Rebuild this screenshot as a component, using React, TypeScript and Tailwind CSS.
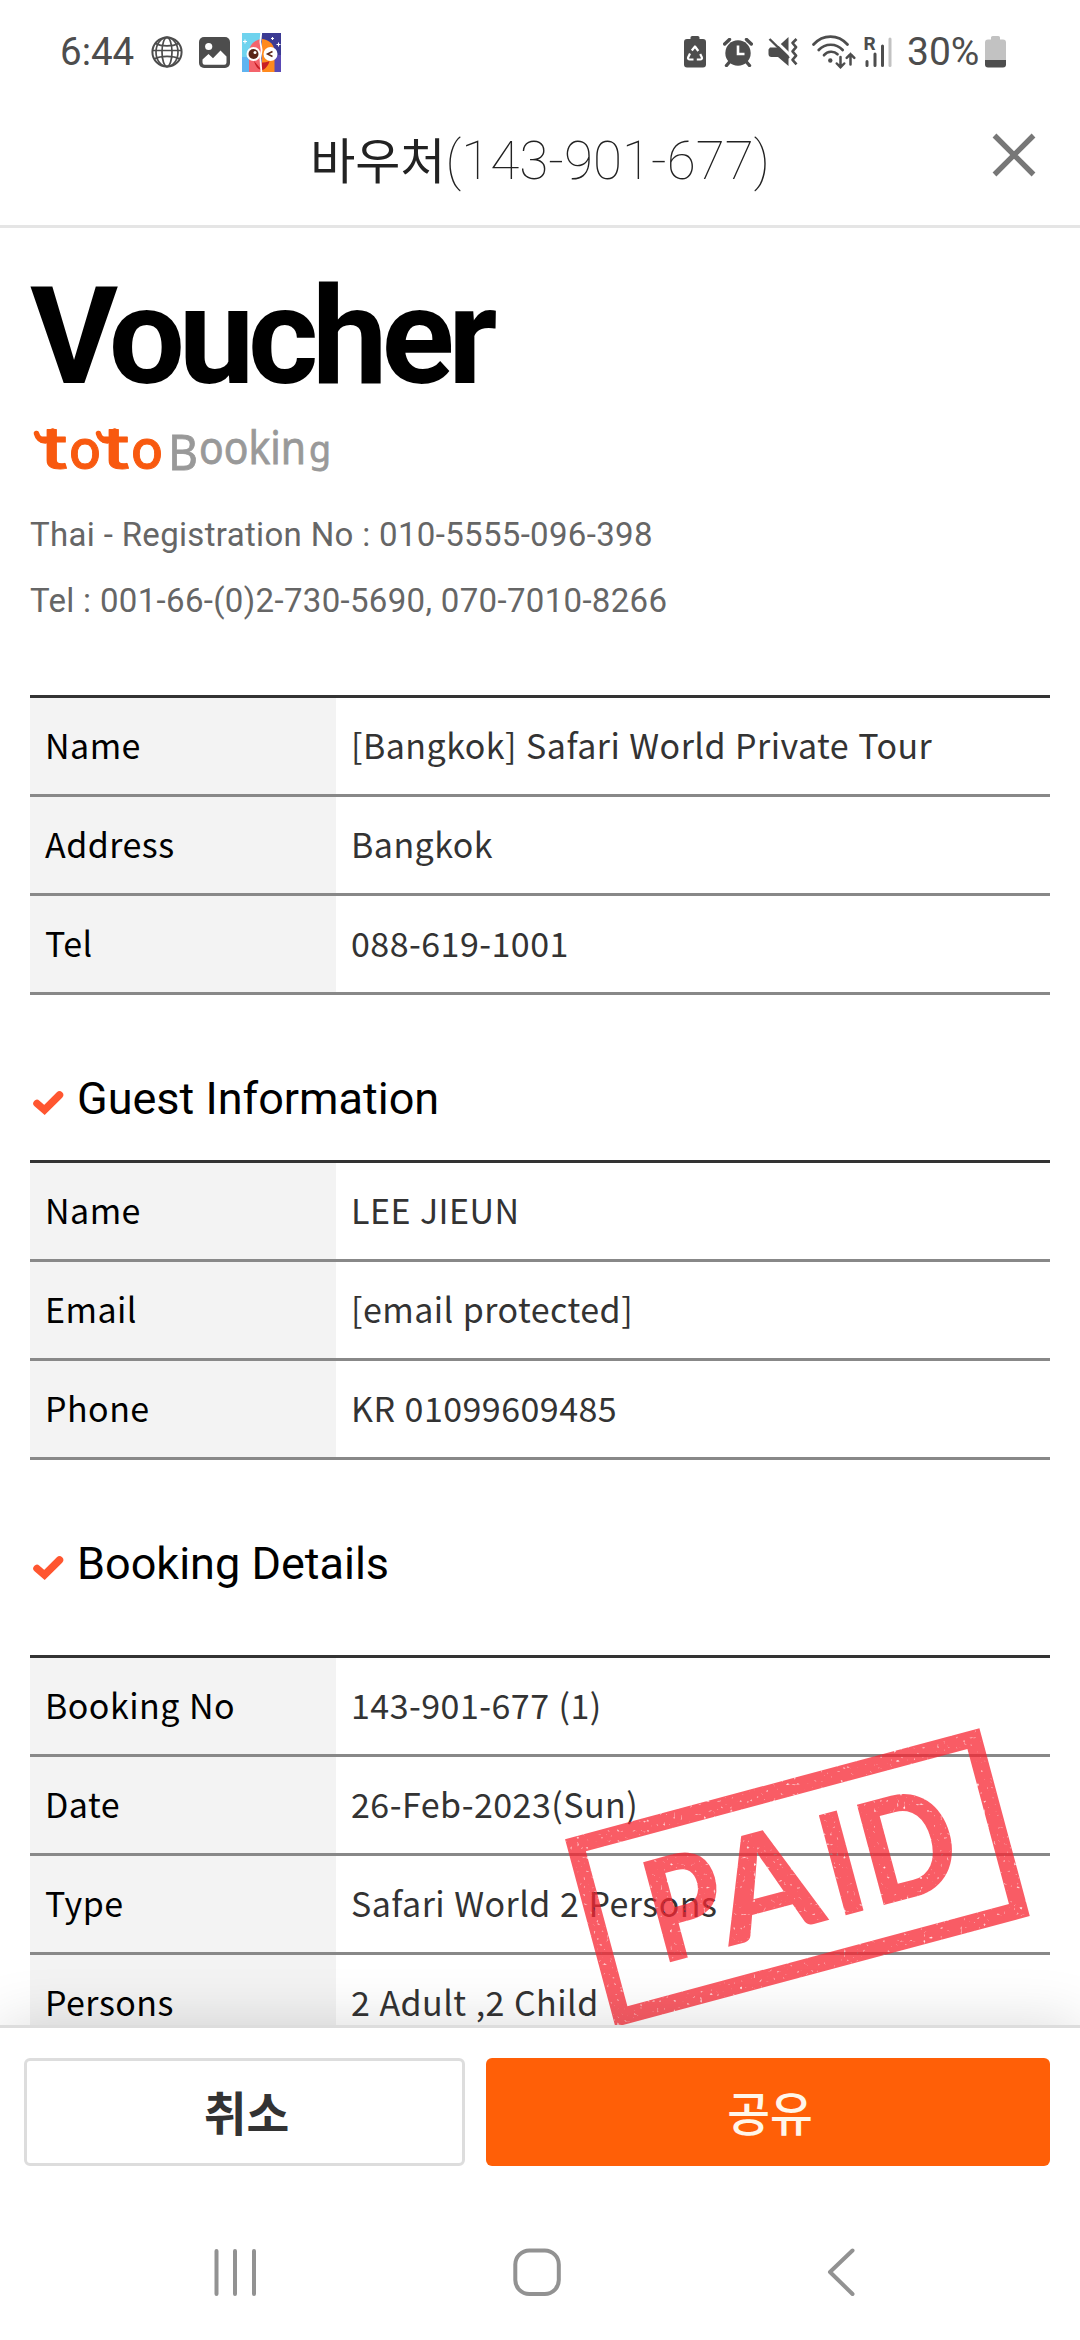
import React from "react";

const ROBOTO = "font-['Roboto','Noto_Sans_CJK_KR',sans-serif]";
const NOTO = "font-['Noto_Sans_CJK_KR','Noto_Sans',sans-serif]";

function GlobeIcon() {
  return (
    <svg width="32" height="32" viewBox="0 0 32 32" fill="none" stroke="#4d4d4d" strokeWidth="1.7">
      <circle cx="16" cy="16" r="14.6" strokeWidth="2" />
      <ellipse cx="16" cy="16" rx="11" ry="14.6" />
      <ellipse cx="16" cy="16" rx="5" ry="14.6" />
      <path d="M4.5 7.5c6 3.2 17 3.2 23 0M1.5 14.5h29M3 23c7-3.4 19-3.4 26 0" />
    </svg>
  );
}

function GalleryIcon() {
  return (
    <svg width="31" height="31" viewBox="0 0 31 31">
      <rect width="31" height="31" rx="5" fill="#4d4d4d" />
      <circle cx="9.7" cy="9.5" r="3.6" fill="#fff" />
      <path d="M3.5 22.5l6-5.5 4.5 4.2L21.500 13.500l6 6V25.500a2.200 2.200 0 0 1-2.200 2.200H5.700a2.200 2.200 0 0 1-2.200-2.200z" fill="#fff" />
    </svg>
  );
}

function FaceAppIcon() {
  return (
    <svg width="39" height="39" viewBox="0 0 39 39">
      <rect width="20" height="39" fill="#6fd3ee" />
      <path d="M0 24h8v15H0z" fill="#5fb4f0" />
      <rect x="19" width="20" height="39" fill="#3b3a93" />
      <path d="M30 22h9v17h-9z" fill="#5a49b5" />
      <path d="M7 39V20C7 12 12 7.500 19 6v33z" fill="#f4646c" />
      <path d="M20 6c8 1 12.500 6 12.500 13v20H20z" fill="#ff8a1e" />
      <path d="M12 28c1.500 5.500 4 8 7 9v-7.500c3 0 6-.5 8.500-1.500-1 4.500-4 8-7.500 9.200z" fill="#c81e24" />
      <path d="M19.200 0l-.8 9 1.200 8-1.200 8 1 14" stroke="#fff" strokeWidth="1.800" fill="none" />
      <circle cx="11.500" cy="21" r="7" fill="#fff" />
      <circle cx="11.500" cy="21" r="5" fill="#5b2416" />
      <circle cx="13" cy="19.500" r="1.500" fill="#fff" />
      <circle cx="28.500" cy="21" r="7" fill="#fff" />
      <path d="M30.500 18.500l-5 2.500 5 2.500" stroke="#5b2416" strokeWidth="1.500" fill="none" />
      <path d="M3 6.500v4M1 8.500h4M36.500 9.500v4M34.500 11.500h4M30.500 4v3M29 5.500h3" stroke="#fff" strokeWidth="1.100" />
    </svg>
  );
}

function RecycleBatteryIcon() {
  return (
    <svg width="22" height="32" viewBox="0 0 22 32">
      <path d="M6.500 3V1.800C6.500.8 7.200 0 8.200 0h5.600c1 0 1.700.8 1.700 1.800V3H19a3 3 0 0 1 3 3v22.500a3 3 0 0 1-3 3H3a3 3 0 0 1-3-3V6a3 3 0 0 1 3-3z" fill="#4d4d4d" />
      <g fill="none" stroke="#fff" strokeWidth="2.200" strokeLinejoin="round">
        <path d="M7.800 14.500L11 10.500l3.300 4.500" />
        <path d="M16.200 18l1.600 3.300c.6 1.300-.2 2.200-1.600 2.200h-3.400" />
        <path d="M9.500 23.500H5.800c-1.400 0-2.200-.9-1.600-2.200L6 17.500" />
      </g>
    </svg>
  );
}

function AlarmIcon() {
  return (
    <svg width="30" height="29" viewBox="0 0 30 29">
      <circle cx="15" cy="15" r="12.700" fill="#4d4d4d" />
      <path d="M1.700 6L6.500 1.500M28.300 6L23.500 1.500M6.500 24l-3 3.500M23.500 24l3 3.500" stroke="#4d4d4d" strokeWidth="3.400" strokeLinecap="round" />
      <path d="M15 7.500V16h6.500" fill="none" stroke="#fff" strokeWidth="2.600" />
    </svg>
  );
}

function MuteIcon() {
  return (
    <svg width="31" height="30" viewBox="0 0 31 30">
      <path d="M2 10.500h7L20.500 0v29L10 20H3.500C1.500 20 .5 19 .5 17v-4.500z" fill="#4d4d4d" />
      <path d="M3.500 0l18 17.500" stroke="#fff" strokeWidth="3" />
      <path d="M1.500 2l19.500 19" stroke="#4d4d4d" strokeWidth="2.400" />
      <path d="M28.500 2l-4 4 3.600 4.200-3.600 4.200 3.600 4.200-3.600 4.200 4 4.500" fill="none" stroke="#4d4d4d" strokeWidth="2.600" strokeLinejoin="round" />
    </svg>
  );
}

function WifiIcon() {
  return (
    <svg width="44" height="34" viewBox="0 0 44 34" fill="none" stroke="#4d4d4d" strokeWidth="2.700" strokeLinecap="round">
      <path d="M1.500 9.500C11 -1 26 -1 35.500 9.500" />
      <path d="M6.700 15c6.500-7 17.500-7 24 0" />
      <path d="M12 20.200c3.800-4.400 10-4.400 13.500-1" />
      <circle cx="18.300" cy="25.500" r="2.200" fill="#4d4d4d" stroke="none" />
      <path d="M28.500 22v10.200M24.800 28.500l3.700 3.800 3.700-3.800M38.500 29.500V19M34.700 22.800l3.800-3.800 3.800 3.800" strokeWidth="2.500" />
    </svg>
  );
}

function SignalIcon() {
  return (
    <svg width="31" height="42" viewBox="0 -4 31 42" className="overflow-visible">
      <text x="0.500" y="14.500" className="font-['Roboto',sans-serif] text-[19px] font-bold" fill="#4d4d4d">R</text>
      <g strokeWidth="3" strokeLinecap="round" stroke="#4d4d4d">
        <path d="M4 26.500v4M12 19v11.500M19.500 11v19.500" />
        <path d="M27 4v26.500" stroke="#c2c2c2" />
      </g>
    </svg>
  );
}

function BatteryIcon() {
  return (
    <svg width="21" height="32" viewBox="0 0 21 32">
      <path d="M6 3.500V1.800C6 .8 6.700 0 7.700 0h5.600c1 0 1.700.8 1.700 1.800v1.700h3a3 3 0 0 1 3 3V24H0V6.500a3 3 0 0 1 3-3z" fill="#c2c2c2" />
      <path d="M0 24h21v4.500a3 3 0 0 1-3 3H3a3 3 0 0 1-3-3z" fill="#4d4d4d" />
    </svg>
  );
}

function StatusBar() {
  return (
    <div className={`flex h-[104px] shrink-0 items-center pl-[60px] pr-[74px] text-[38.5px] leading-none text-[#4d4d4d] ${ROBOTO}`}>
      <span className="w-[91px]">6:44</span>
      <GlobeIcon />
      <span className="ml-4"><GalleryIcon /></span>
      <span className="ml-3"><FaceAppIcon /></span>
      <div className="ml-auto flex items-center">
        <RecycleBatteryIcon />
        <span className="ml-[17px]"><AlarmIcon /></span>
        <span className="ml-[15px]"><MuteIcon /></span>
        <span className="ml-[13px]"><WifiIcon /></span>
        <span className="ml-[7px]"><SignalIcon /></span>
        <span className="ml-[13px] w-[78px] whitespace-nowrap text-[39px]">30%</span>
        <BatteryIcon />
      </div>
    </div>
  );
}

function TitleBar() {
  return (
    <header className="relative flex h-[124px] shrink-0 items-center justify-center border-b-[3px] border-[#e5e5e5] pb-2 text-[#222]">
      <h1 className="flex items-baseline whitespace-nowrap">
        <span className={`text-[49px] font-normal leading-none ${NOTO}`}>바우처</span>
        <span className="font-['Roboto',sans-serif] text-[53px] font-thin leading-none">(143-901-677)</span>
      </h1>
      <button aria-label="close" className="absolute right-[44px] top-[29px]">
        <svg width="44" height="44" viewBox="0 0 44 44" stroke="#777" strokeWidth="5.400">
          <path d="M2.500 2.500l39 39M41.500 2.500l-39 39" />
        </svg>
      </button>
    </header>
  );
}

function TotoLogo() {
  return (
    <svg width="320" height="70" viewBox="0 0 320 70" className="block overflow-visible">
      <g fill="#f8590f" stroke="#f8590f" strokeWidth="1" strokeLinejoin="round" className="font-['Inter',sans-serif] font-medium">
        <text x="10" y="57" textLength="28" lengthAdjust="spacingAndGlyphs" className="text-[58px]">t</text>
        <text x="39" y="57" textLength="32" lengthAdjust="spacingAndGlyphs" className="text-[55px]">o</text>
        <text x="72" y="57" textLength="28" lengthAdjust="spacingAndGlyphs" className="text-[58px]">t</text>
        <text x="101" y="57" textLength="32" lengthAdjust="spacingAndGlyphs" className="text-[55px]">o</text>
      </g>
      <g fill="none" stroke="#f8590f" strokeWidth="5.500" strokeLinecap="round">
        <path d="M6.500 21.500c1 4 4 7 9 7.500M68.500 21.500c1 4 4 7 9 7.500" />
        <path d="M22.500 19l-.5 7M84.500 19l-.5 7" />
      </g>
      <g fill="#999" stroke="#999" strokeWidth="0.800" className="font-['Noto_Sans',sans-serif]">
        <text x="138" y="57.500" textLength="30" lengthAdjust="spacingAndGlyphs" className="text-[50px]">B</text>
        <text x="169" y="52" textLength="107" lengthAdjust="spacingAndGlyphs" className="text-[45px]">ookin</text>
        <text x="279" y="50" textLength="22" lengthAdjust="spacingAndGlyphs" className="text-[37px]">g</text>
      </g>
    </svg>
  );
}

type Row = [string, string];

function InfoTable({ rows }: { rows: Row[] }) {
  return (
    <dl className={`border-t-[3px] border-[#333] text-[34px] leading-[94px] tracking-[0.46px] [word-spacing:1px] ${NOTO}`}>
      {rows.map(([label, value]) => (
        <div key={label} className="flex h-[99px] border-b-[3px] border-[#888]">
          <dt className="w-[306px] bg-[#f3f3f3] pl-[15px] text-black">{label}</dt>
          <dd className="flex-1 whitespace-nowrap pl-[15px] text-[#333]">{value}</dd>
        </div>
      ))}
    </dl>
  );
}

function SectionTitle({ children }: { children: React.ReactNode }) {
  return (
    <h3 className={`mt-[74px] flex h-[60px] items-center text-[45px] leading-[60px] text-black ${ROBOTO}`}>
      <svg width="47" height="60" viewBox="0 0 47 60" className="shrink-0">
        <path d="M7 34.500l7.500 6.500L29.500 26" fill="none" stroke="#ff5630" strokeWidth="7.500" strokeLinecap="round" />
      </svg>
      <span className="whitespace-nowrap">{children}</span>
    </h3>
  );
}

function PaidStamp() {
  return (
    <svg width="500" height="340" viewBox="0 0 500 340" className="absolute right-[20px] top-[1472px] opacity-75">
      <defs>
        <filter id="speckle" filterUnits="userSpaceOnUse" x="0" y="0" width="500" height="340">
          <feTurbulence type="fractalNoise" baseFrequency="0.3" numOctaves="1" seed="8" />
          <feColorMatrix type="matrix" values="0 0 0 0 1  0 0 0 0 1  0 0 0 0 1  0 0 0 -6 5" result="grain" />
          <feComposite in="SourceGraphic" in2="grain" operator="in" />
        </filter>
      </defs>
      <g filter="url(#speckle)">
        <g transform="translate(5.300 139.300) rotate(-15)" fill="#f72633">
          <rect x="8.300" y="8.300" width="412" height="177.500" fill="none" stroke="#f72633" strokeWidth="17" />
          <g className="font-['Lato',sans-serif] text-[143px] font-black">
            <text x="60" y="146" textLength="77" lengthAdjust="spacingAndGlyphs">P</text>
            <text x="131" y="146" textLength="102" lengthAdjust="spacingAndGlyphs">A</text>
            <text x="242" y="146" textLength="37" lengthAdjust="spacingAndGlyphs">I</text>
            <text x="281" y="146" textLength="96" lengthAdjust="spacingAndGlyphs">D</text>
          </g>
        </g>
      </g>
    </svg>
  );
}

function ActionBar() {
  return (
    <footer className="relative flex h-[171px] shrink-0 gap-[21px] border-t-[3px] border-[#ddd] bg-white pl-6 pr-[30px] pt-[30px] shadow-[0_0_60px_rgba(0,0,0,0.15)]">
      <button className={`h-[108px] w-[441px] rounded-[6px] border-[3px] border-[#ddd] pb-[2px] pl-[4px] text-[46.5px] font-bold leading-[96px] text-[#333] ${NOTO}`}>취소</button>
      <button className={`h-[108px] flex-1 rounded-[6px] bg-[#ff5f07] pb-[2px] pl-[4px] text-[46.5px] font-medium leading-[102px] text-[#fff6ea] ${NOTO}`}>공유</button>
    </footer>
  );
}

function NavBar() {
  return (
    <nav className="relative flex h-[144px] shrink-0 items-start bg-white pl-[213px] pt-[50px]">
      <svg width="46" height="52" viewBox="0 0 46 52" stroke="#929292" strokeWidth="4" strokeLinecap="round">
        <path d="M3.500 5v43M22 5v43M41 5v43" />
      </svg>
      <svg width="50" height="52" viewBox="0 0 50 52" className="ml-[253px]" fill="none" stroke="#929292" strokeWidth="4">
        <rect x="3.300" y="4.500" width="43.500" height="43.500" rx="14" />
      </svg>
      <svg width="34" height="52" viewBox="0 0 34 52" className="ml-[263px]" fill="none" stroke="#929292" strokeWidth="4" strokeLinecap="round" strokeLinejoin="round">
        <path d="M27.500 4.500L5 26l22.500 22" />
      </svg>
    </nav>
  );
}

export default function App() {
  return (
    <div className="flex h-[2340px] w-[1080px] flex-col overflow-hidden bg-white">
      <StatusBar />
      <TitleBar />
      <main className="relative min-h-0 flex-1 overflow-hidden px-[30px] pt-[34px]">
        <h2 className="h-[150px] font-['Roboto',sans-serif] text-[135px] font-bold leading-[150px] tracking-[-6.3px] text-black">Voucher</h2>
        <TotoLogo />
        <div className={`mt-5 whitespace-nowrap text-[33px] leading-[66px] tracking-[0.33px] text-[#666] ${ROBOTO}`}>
          <p>Thai - Registration No : 010-5555-096-398</p>
          <p>Tel : 001-66-(0)2-730-5690, 070-7010-8266</p>
        </div>
        <div className="mt-[61px]">
          <InfoTable rows={[["Name", "[Bangkok] Safari World Private Tour"], ["Address", "Bangkok"], ["Tel", "088-619-1001"]]} />
        </div>
        <SectionTitle>Guest Information</SectionTitle>
        <div className="mt-[31px]">
          <InfoTable rows={[["Name", "LEE JIEUN"], ["Email", "[email protected]"], ["Phone", "KR 01099609485"]]} />
        </div>
        <SectionTitle>Booking Details</SectionTitle>
        <div className="mt-[61px]">
          <InfoTable rows={[["Booking No", "143-901-677 (1)"], ["Date", "26-Feb-2023(Sun)"], ["Type", "Safari World 2 Persons"], ["Persons", "2 Adult ,2 Child"]]} />
        </div>
        <PaidStamp />
      </main>
      <ActionBar />
      <NavBar />
    </div>
  );
}
